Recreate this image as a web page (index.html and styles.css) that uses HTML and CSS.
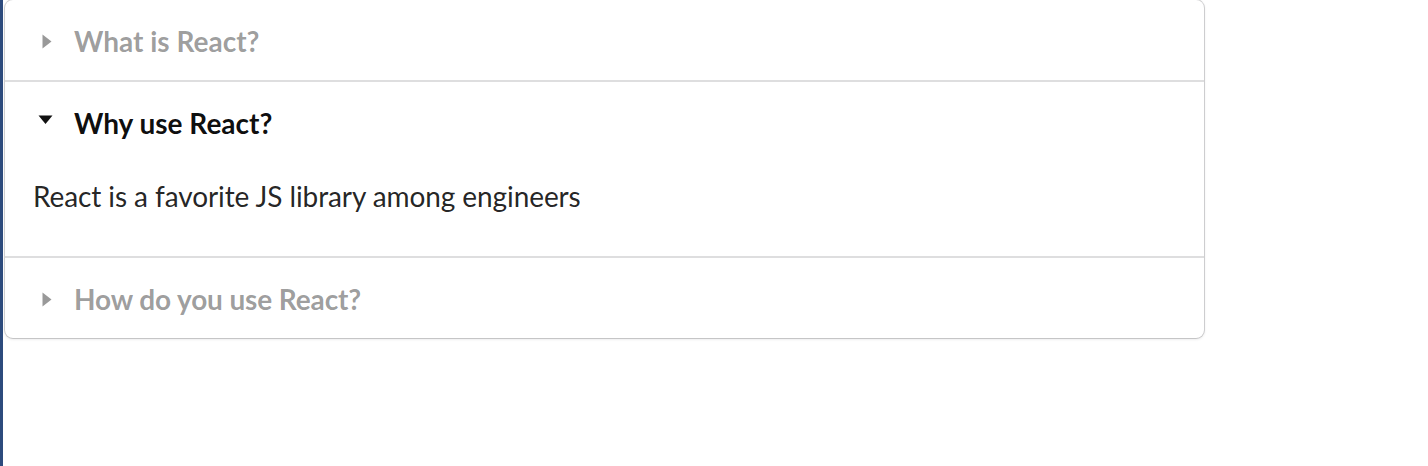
FILE: index.html
```html
<!DOCTYPE html>
<html>
<head>
<meta charset="utf-8">
<link rel="stylesheet" href="styles.css">
</head>
<body>
<div class="page">
  <div class="strip"></div>
  <div class="main">
    <div class="accordion">
      <div class="title">
        <svg class="icon" width="35" height="40" viewBox="0 0 35 40"><polygon points="10.5,13.5 19.5,20.5 10.5,27.5" fill="#999"/></svg>
        <span>What is React?</span>
      </div>
      <div class="title active">
        <svg class="icon" width="35" height="40" viewBox="0 0 35 40"><polygon points="6.5,12.5 20.5,12.5 13.5,21" fill="#111"/></svg>
        <span>Why use React?</span>
      </div>
      <div class="content">React is a favorite JS library among engineers</div>
      <div class="title">
        <svg class="icon" width="35" height="40" viewBox="0 0 35 40"><polygon points="10.5,13.5 19.5,20.5 10.5,27.5" fill="#999"/></svg>
        <span class="tight">How do you use React?</span>
      </div>
    </div>
  </div>
</div>
</body>
</html>
```

FILE: styles.css
```css
html, body {
  margin: 0;
  padding: 0;
  background: #fff;
}
.page {
  display: flex;
  height: 466px;
  font-family: Lato, "Noto Sans", sans-serif;
}
.strip {
  width: 3px;
  background: #2d4b7d;
  flex: none;
}
.main {
  padding-left: 2px;
  width: 1199px;
}
.accordion {
  background: #fff;
  border-radius: 8px;
  box-shadow: 0 1px 3px 0 rgba(34, 36, 38, 0.15), 0 0 0 1px rgba(34, 36, 38, 0.18);
}
.title {
  display: flex;
  align-items: center;
  padding: 21px 27px 19px 27px;
  height: 40px;
  font-size: 28px;
  line-height: 40px;
  font-weight: 700;
  color: rgba(0, 0, 0, 0.4);
}
.title + .title,
.content + .title {
  border-top: 2px solid rgba(34, 36, 38, 0.15);
}
.title.active {
  color: rgba(0, 0, 0, 0.95);
}
.tight {
  letter-spacing: -0.12px;
}
.icon {
  flex: none;
  margin-right: 7px;
}
.content {
  padding: 14px 28px 40px 28px;
  font-size: 28px;
  line-height: 40px;
  color: rgba(0, 0, 0, 0.87);
  letter-spacing: -0.09px;
}
```
